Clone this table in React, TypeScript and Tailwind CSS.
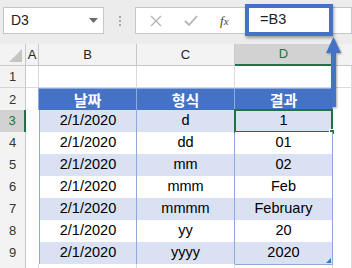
import type { ReactNode } from "react";

const cols = "grid grid-cols-[26px_13px_98px_98px_98px_1fr]";

const rows = [
  { d: "2/1/2020", f: "d", r: "1" },
  { d: "2/1/2020", f: "dd", r: "01" },
  { d: "2/1/2020", f: "mm", r: "02" },
  { d: "2/1/2020", f: "mmm", r: "Feb" },
  { d: "2/1/2020", f: "mmmm", r: "February" },
  { d: "2/1/2020", f: "yy", r: "20" },
  { d: "2/1/2020", f: "yyyy", r: "2020" },
];

function RowHead({ n, active }: { n?: number; active?: boolean }) {
  return (
    <div
      className={`flex items-center justify-center text-[13px] border-b border-[#d4d4d4] ${
        active
          ? "bg-[#d2d2d2] text-[#217346] border-r-2 border-r-[#217346]"
          : "bg-[#f3f3f3] text-[#333] border-r border-r-[#c8c8c8]"
      }`}
    >
      {n}
    </div>
  );
}

function Cell({ children, band, left }: { children?: ReactNode; band?: boolean; left?: boolean }) {
  return (
    <div
      className={`flex items-center justify-center text-[14.5px] text-black border-r border-b border-[#8ea9db] ${
        band ? "bg-[#d9e1f2]" : "bg-white"
      } ${left ? "border-l" : ""}`}
    >
      {children}
    </div>
  );
}

function Blank() {
  return <div className="border-r border-b border-[#dadada] bg-white" />;
}

export default function App() {
  return (
    <div className="relative w-[352px] h-[268px] overflow-hidden bg-white font-['Liberation_Sans',Arial,sans-serif]">
      {/* formula bar */}
      <div className="relative h-[44px] bg-[#ececec] flex items-start pt-[7px] pl-[3px]">
        <div className="w-[101px] h-[27px] bg-white border border-[#c6c6c6] flex items-center justify-between pl-[7px] pr-[5px]">
          <span className="text-[14px] text-[#222]">D3</span>
          <svg width="9" height="5" viewBox="0 0 9 5">
            <path d="M0 0h9L4.5 5z" fill="#6b6b6b" />
          </svg>
        </div>
        <div className="w-[31px] h-[27px] flex flex-col items-center justify-center gap-[2px]">
          <span className="w-[2px] h-[2px] bg-[#a8a8a8]" />
          <span className="w-[2px] h-[2px] bg-[#a8a8a8]" />
          <span className="w-[2px] h-[2px] bg-[#a8a8a8]" />
        </div>
        <div className="flex-1 h-[27px] bg-white border border-[#c6c6c6] flex items-center">
          <svg className="ml-[14px]" width="12" height="12" viewBox="0 0 12 12">
            <path d="M1 1l10 10M11 1L1 11" stroke="#b3b3b3" strokeWidth="1.3" />
          </svg>
          <svg className="ml-[22px]" width="14" height="11" viewBox="0 0 14 11">
            <path d="M1 6l4 4 8-9" stroke="#b3b3b3" strokeWidth="1.8" fill="none" />
          </svg>
          <span className="ml-[22px] text-[13px] italic text-[#444] font-['Liberation_Serif',serif]">
            f<span className="text-[11px]">x</span>
          </span>
        </div>
        <div className="absolute left-[245px] top-[4px] w-[88px] h-[32px] bg-white border-[4px] border-[#4472c4] shadow-[1px_2px_3px_rgba(0,0,0,0.35)] flex items-center pl-[11px]">
          <span className="text-[14.5px] text-[#222]">=B3</span>
        </div>
      </div>

      {/* column headers */}
      <div className={`${cols} h-[22px] bg-[#f3f3f3] text-[13px] text-[#222]`}>
        <div className="relative border-r border-b border-[#c8c8c8]">
          <svg className="absolute right-[3px] bottom-[3px]" width="13" height="13" viewBox="0 0 13 13">
            <path d="M13 0v13H0z" fill="#c4c4c4" />
          </svg>
        </div>
        <div className="flex items-center justify-center border-r border-b border-[#c8c8c8]">A</div>
        <div className="flex items-center justify-center border-r border-b border-[#c8c8c8]">B</div>
        <div className="flex items-center justify-center border-r border-b border-[#c8c8c8]">C</div>
        <div className="flex items-center justify-center bg-[#d2d2d2] text-[#217346] border-r border-r-[#c8c8c8] border-b-2 border-b-[#217346]">D</div>
        <div className="border-b border-[#c8c8c8]" />
      </div>

      {/* row 1 */}
      <div className={`${cols} h-[22px]`}>
        <RowHead n={1} />
        <Blank />
        <Blank />
        <Blank />
        <Blank />
        <Blank />
      </div>

      {/* row 2: table header */}
      <div className={`${cols} h-[22px]`}>
        <RowHead n={2} />
        <div className="border-r border-b border-[#dadada] border-r-[#8ea9db]" />
        {["날짜", "형식", "결과"].map((h) => (
          <div
            key={h}
            className="flex items-center justify-center bg-[#4472c4] text-white font-bold text-[15px] font-['Noto_Sans_CJK_KR',sans-serif] border-r border-b border-[#8ea9db] border-t"
          >
            {h}
          </div>
        ))}
        <Blank />
      </div>

      {rows.map((row, i) => {
        const band = i % 2 === 0;
        const n = i + 3;
        return (
          <div key={n} className={`${cols} h-[22px]`}>
            <RowHead n={n} active={n === 3} />
            <div className="border-b border-[#dadada] bg-white" />
            <Cell band={band} left>
              {row.d}
            </Cell>
            <Cell band={band}>{row.f}</Cell>
            <div className={`relative flex items-center justify-center text-[14.5px] text-black border-r border-b border-[#8ea9db] ${band ? "bg-[#d9e1f2]" : "bg-white"}`}>
              {row.r}
              {n === 3 && (
                <div className="absolute -left-[1px] -top-[1px] -right-[1px] -bottom-[1px] border-2 border-[#217346]">
                  <div className="absolute -right-[4px] -bottom-[4px] w-[6px] h-[6px] bg-[#217346] border border-white" />
                </div>
              )}
              {n === 9 && (
                <svg className="absolute right-[1px] bottom-[1px]" width="5" height="5" viewBox="0 0 5 5">
                  <path d="M5 0v5H0z" fill="#4472c4" />
                </svg>
              )}
            </div>
            <Blank />
          </div>
        );
      })}

      {/* row 10, only its top edge shows */}
      <div className={`${cols} h-[22px]`}>
        <RowHead />
        <Blank />
        <Blank />
        <Blank />
        <Blank />
        <Blank />
      </div>

      {/* annotation arrow */}
      <svg
        className="absolute left-[326px] top-[37px] drop-shadow-[1px_1px_1px_rgba(0,0,0,0.35)]"
        width="16"
        height="71"
        viewBox="0 0 16 71"
      >
        <path d="M7.5 0L15 16H10V70H5V16H0Z" fill="#4472c4" />
      </svg>
    </div>
  );
}
